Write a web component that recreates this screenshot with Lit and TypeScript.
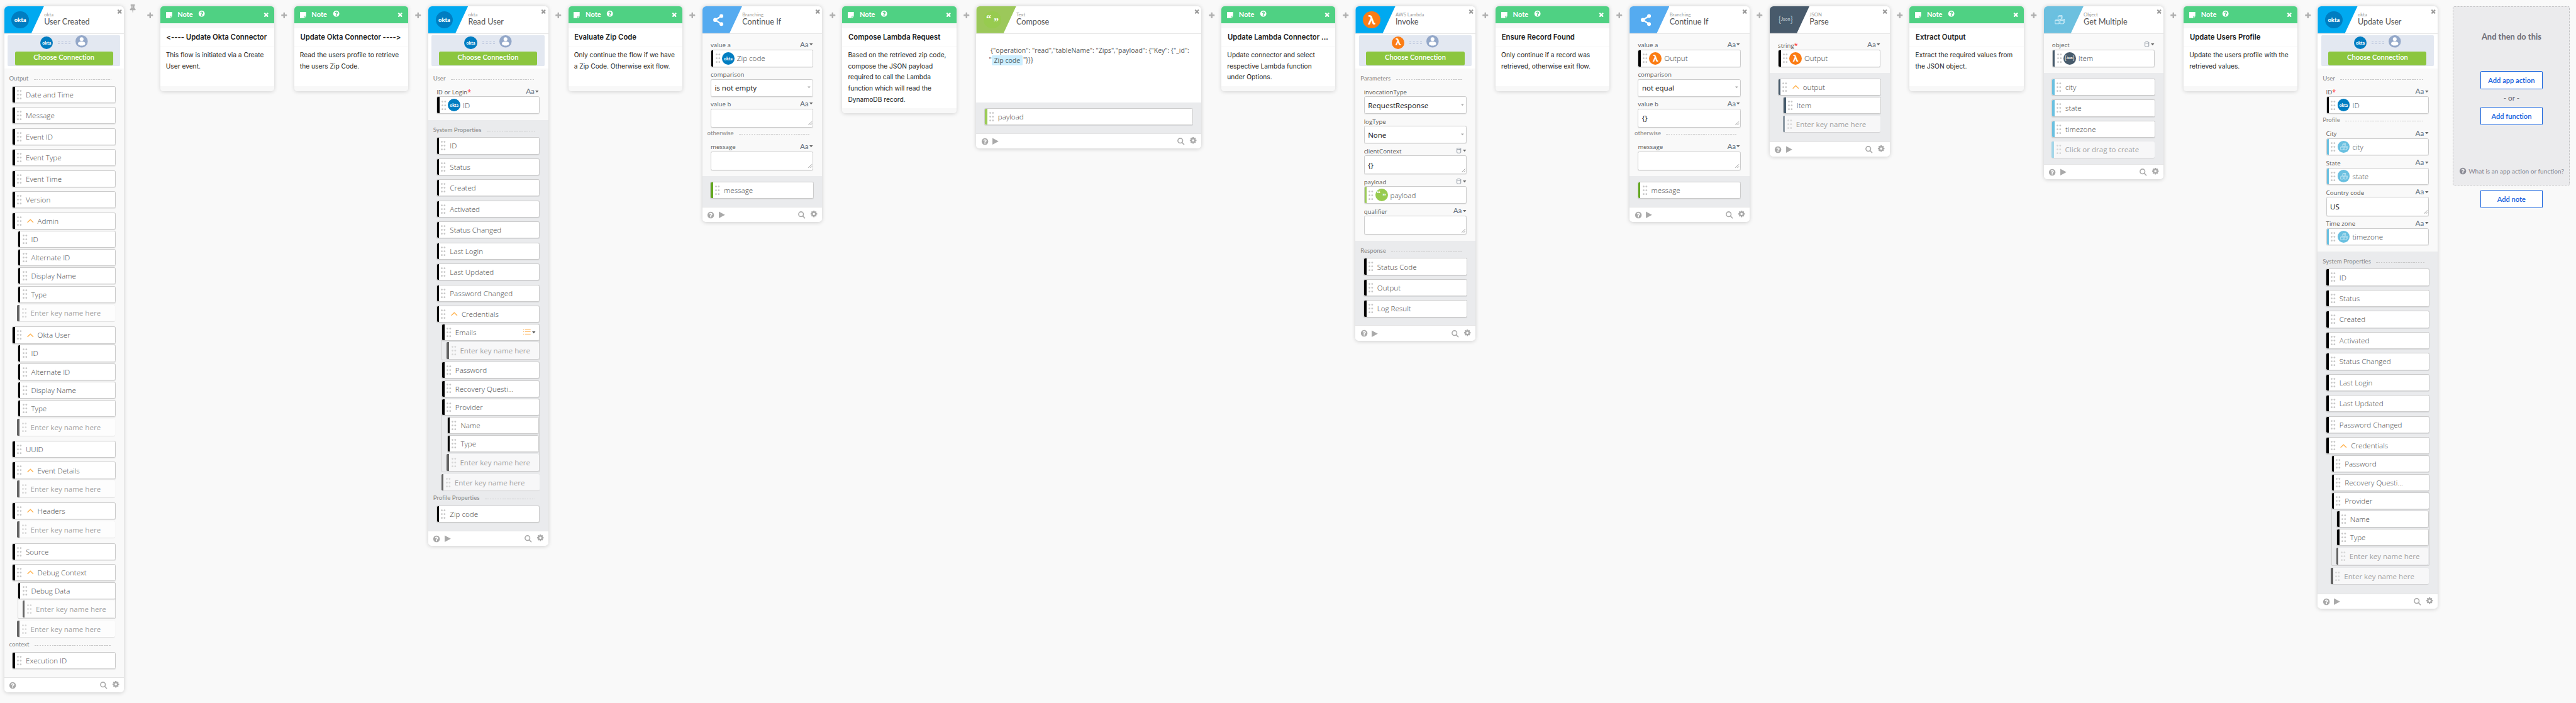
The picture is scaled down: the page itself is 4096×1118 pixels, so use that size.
import { LitElement, html, svg, css, nothing, TemplateResult } from "lit";
import { customElement } from "lit/decorators.js";
import { classMap } from "lit/directives/class-map.js";

type Brand = "okta" | "lambda" | "text" | "json" | "object" | "branch";
type Kind = "text" | "object" | "none";

interface Key { name: string; open?: boolean; list?: boolean; ghost?: boolean; kids?: Key[]; }
interface Field { label: string; required?: boolean; kind: Kind; value?: string; control: "pill" | "select" | "area"; brand?: Brand; }
interface Group { label?: string; fields?: Field[]; keys?: Key[]; }
interface Card { type: "card"; app: string; title: string; brand: Brand; connection?: boolean; inputs?: Group[]; outputs?: Group[]; plain?: boolean; compose?: boolean; }
interface Note { type: "note"; title: string; lines: string[]; }

const FA = {
  times:
    "M1490 1322q0 40-28 68l-136 136q-28 28-68 28t-68-28l-294-294-294 294q-28 28-68 28t-68-28l-136-136q-28-28-28-68t28-68l294-294-294-294q-28-28-28-68t28-68l136-136q28-28 68-28t68 28l294 294 294-294q28-28 68-28t68 28l136 136q28 28 28 68t-28 68l-294 294 294 294q28 28 28 68z",
  plus: "M1600 736v192q0 40-28 68t-68 28h-416v416q0 40-28 68t-68 28h-192q-40 0-68-28t-28-68v-416h-416q-40 0-68-28t-28-68v-192q0-40 28-68t68-28h416v-416q0-40 28-68t68-28h192q40 0 68 28t28 68v416h416q40 0 68 28t28 68z",
  cog: "M1152 896q0-106-75-181t-181-75-181 75-75 181 75 181 181 75 181-75 75-181zm512-109v222q0 12-8 23t-20 13l-185 28q-19 54-39 91 35 50 107 138 10 12 10 25t-9 23q-27 37-99 108t-94 71q-12 0-26-9l-138-108q-44 23-91 38-16 136-29 186-7 28-36 28h-222q-14 0-24.5-8.5t-11.5-21.500l-28-184q-49-16-90-37l-141 107q-10 9-25 9-14 0-25-11-126-114-165-168-7-10-7-23 0-12 8-23 15-21 51-66.500t54-70.500q-27-50-41-99l-183-27q-13-2-21-12.500t-8-23.500v-222q0-12 8-23t19-13l186-28q14-46 39-92-40-57-107-138-10-12-10-24 0-10 9-23 26-36 98.500-107.500t94.500-71.500q13 0 26 10l138 107q44-23 91-38 16-136 29-186 7-28 36-28h222q14 0 24.500 8.500t11.500 21.500l28 184q49 16 90 37l142-107q9-9 24-9 13 0 25 10 129 119 165 170 7 8 7 22 0 12-8 23-15 21-51 66.500t-54 70.500q26 50 41 98l183 28q13 2 21 12.500t8 23.500z",
  help: "M1024 1376v-192q0-14-9-23t-23-9h-192q-14 0-23 9t-9 23v192q0 14 9 23t23 9h192q14 0 23-9t9-23zm256-672q0-88-55.500-163t-138.500-116-170-41q-243 0-371 213-15 24 8 42l132 100q7 6 19 6 16 0 25-12 53-68 86-92 34-24 86-24 48 0 85.500 26t37.500 59q0 38-20 61t-68 45q-63 28-115.500 86.500t-52.500 125.500v36q0 14 9 23t23 9h192q14 0 23-9t9-23q0-19 21.500-49.500t54.500-49.500q32-18 49-28.500t46-35 44.500-48 28-60.500 12.500-81zm384 192q0 209-103 385.500t-279.500 279.500-385.500 103-385.500-103-279.500-279.500-103-385.500 103-385.500 279.500-279.500 385.500-103 385.500 103 279.500 279.500 103 385.500z",
  pin: "M800 864v-448q0-14-9-23t-23-9-23 9-9 23v448q0 14 9 23t23 9 23-9 9-23zm672 352q0 26-19 45t-45 19h-429l-51 483q-2 12-10.500 20.500t-20.500 8.500h-1q-27 0-32-27l-76-485h-404q-26 0-45-19t-19-45q0-123 78.500-221.500t177.500-98.500v-512q-52 0-90-38t-38-90 38-90 90-38h640q52 0 90 38t38 90-38 90-90 38v512q99 0 177.500 98.500t78.500 221.500z",
};

const fa = (name: keyof typeof FA, cls: string) =>
  html`<svg class="ico ${cls}" viewBox="0 0 1792 1792"><path d=${FA[name]}></path></svg>`;

const searchIcon = html`<svg class="ico i-search" viewBox="0 0 14 14">
  <circle cx="5.8" cy="5.8" r="4.7" fill="none" stroke="currentColor" stroke-width="1.9"></circle>
  <path d="M9.200 9.200L13 13.200" fill="none" stroke="currentColor" stroke-width="2.100" stroke-linecap="round"></path>
</svg>`;
const playIcon = html`<svg class="ico i-play" viewBox="0 0 12 14"><path d="M0 .5L12 7 0 13.500z"></path></svg>`;
const caret = html`<svg class="ico i-caret" viewBox="0 0 7 4"><path d="M0 0h7L3.500 4z"></path></svg>`;
const chevron = html`<svg class="i-chevron" viewBox="0 0 13 8"><path d="M.8 7L6.500 1.500 12.200 7"></path></svg>`;
const listIcon = html`<svg class="i-list" viewBox="0 0 14 11">
  <path d="M0 1h1.300M0 5.500h1.300M0 10h1.300M3.200 1H14M3.200 5.500H14M3.200 10H14"></path>
</svg>`;
const dots = html`<svg class="dots" viewBox="0 0 9 18.200">
  ${[1.8, 9.1, 16.4].map((y) => [1.8, 7].map((x) => svg`<circle cx=${x} cy=${y} r="1.650"></circle>`))}
</svg>`;
const grip = html`<svg class="grip" viewBox="0 0 8 8"><path d="M.5 7.500l7-7M4.500 7.500l3-3"></path></svg>`;
const cylinder = html`<svg class="i-cyl" viewBox="0 0 9 11">
  <path d="M.7 2v7c0 .9 1.600 1.400 3.800 1.400s3.800-.5 3.800-1.400V2"></path>
  <ellipse cx="4.500" cy="2" rx="3.800" ry="1.400"></ellipse>
</svg>`;
const noteIcon = html`<svg class="ico i-note" viewBox="0 0 12 12"><path d="M0 0h12v8H8.800q-1 0-1 1v3H0z M8.900 12V9.100H12z"></path></svg>`;
const userIcon = html`<svg class="i-user" viewBox="0 0 24 24">
  <circle cx="12" cy="12" r="12" fill="#94a8c9"></circle>
  <circle cx="12" cy="7.600" r="3.700" fill="#fff"></circle>
  <path d="M5 16.400c0-2.600 3-4 7-4s7 1.400 7 4c0 2-3.200 3.900-7 3.900s-7-1.900-7-3.900z" fill="#fff"></path>
</svg>`;
const shareIcon = html`<svg class="i-share" viewBox="0 0 20 24">
  <path d="M16 4.200L4 12l12 7.800" fill="none" stroke="#fff" stroke-width="2.800"></path>
  <circle cx="16" cy="4.200" r="3.700"></circle><circle cx="4" cy="12" r="3.900"></circle><circle cx="16" cy="19.800" r="3.700"></circle>
</svg>`;
const cubesIcon = html`<svg class="i-cubes" viewBox="0 0 20 18">
  <path d="M6.500 2.500L8.500.8h6v5.500l-2 2M6.500 2.500h6v5.800h-6zM12.500 2.500l2-1.700M1 10.200h7.500v6.500H1zM1 10.200l2-2h3.500M10.500 10.200H17v6.500h-6.500zM8.500 10.200l2-2M10.500 10.200l2-2h6.700L17 10.200M17 16.700l2-2V8.300M8.500 16.700l2-2"></path>
</svg>`;

const COLORS: Record<Brand, string> = {
  okta: "#000000",
  lambda: "#000000",
  text: "#9bcb57",
  json: "#475b6c",
  object: "#6ac0e0",
  branch: "#63a81f",
};

const mark = (b: Brand) => {
  switch (b) {
    case "okta":
      return html`<span class="m-okta">okta</span>`;
    case "lambda":
      return html`<span class="m-lambda">λ</span>`;
    case "text":
      return html`<span class="m-quote"><span class="q1">“</span><span class="q2">”</span></span>`;
    case "json":
      return html`<span class="m-json"><span class="brace">{</span>Json<span class="brace">}</span></span>`;
    case "object":
      return cubesIcon;
    default:
      return shareIcon;
  }
};
const badge = (b: Brand, size: string) => html`<span class="badge ${b} ${size}">${mark(b)}</span>`;

const k = (name: string, extra: Partial<Key> = {}): Key => ({ name, ...extra });
const ghost = k("Enter key name here", { ghost: true });
const pill = (label: string, value: string, brand: Brand, kind: Kind = "text", required = false): Field => ({
  label, value, brand, kind, required, control: "pill",
});
const note = (title: string, ...lines: string[]): Note => ({ type: "note", title, lines });

const person = () => [k("ID"), k("Alternate ID"), k("Display Name"), k("Type"), ghost];
const system = (emails: boolean): Key[] => [
  ...["ID", "Status", "Created", "Activated", "Status Changed", "Last Login", "Last Updated", "Password Changed"].map((n) => k(n)),
  k("Credentials", {
    open: true,
    kids: [
      ...(emails ? [k("Emails", { list: true, kids: [ghost] })] : []),
      k("Password"),
      k("Recovery Questi..."),
      k("Provider", { kids: [k("Name"), k("Type"), ghost] }),
      ghost,
    ],
  }),
];
const continueIf = (value: string, brand: Brand, comparison: string, b: string): Card => ({
  type: "card",
  app: "Branching",
  title: "Continue If",
  brand: "branch",
  inputs: [
    {
      fields: [
        pill("value a", value, brand),
        { label: "comparison", kind: "none", control: "select", value: comparison },
        { label: "value b", kind: "text", control: "area", value: b },
      ],
    },
    { label: "otherwise", fields: [{ label: "message", kind: "text", control: "area" }] },
  ],
  outputs: [{ keys: [k("message")] }],
});

const STEPS: (Card | Note)[] = [
  {
    type: "card",
    app: "okta",
    title: "User Created",
    brand: "okta",
    connection: true,
    plain: true,
    outputs: [
      {
        label: "Output",
        keys: [
          k("Date and Time"), k("Message"), k("Event ID"), k("Event Type"), k("Event Time"), k("Version"),
          k("Admin", { open: true, kids: person() }),
          k("Okta User", { open: true, kids: person() }),
          k("UUID"),
          k("Event Details", { open: true, kids: [ghost] }),
          k("Headers", { open: true, kids: [ghost] }),
          k("Source"),
          k("Debug Context", { open: true, kids: [k("Debug Data", { kids: [ghost] }), ghost] }),
        ],
      },
      { label: "context", keys: [k("Execution ID")] },
    ],
  },
  note("<---- Update Okta Connector", "This flow is initiated via a Create", "User event."),
  note("Update Okta Connector ---->", "Read the users profile to retrieve", "the users Zip Code."),
  {
    type: "card",
    app: "okta",
    title: "Read User",
    brand: "okta",
    connection: true,
    inputs: [{ label: "User", fields: [pill("ID or Login", "ID", "okta", "text", true)] }],
    outputs: [
      { label: "System Properties", keys: system(true) },
      { label: "Profile Properties", keys: [k("Zip code")] },
    ],
  },
  note("Evaluate Zip Code", "Only continue the flow if we have", "a Zip Code. Otherwise exit flow."),
  continueIf("Zip code", "okta", "is not empty", ""),
  note("Compose Lambda Request", "Based on the retrieved zip code,", "compose the JSON payload", "required to call the Lambda", "function which will read the", "DynamoDB record."),
  { type: "card", app: "Text", title: "Compose", brand: "text", compose: true, outputs: [{ keys: [k("payload")] }] },
  note("Update Lambda Connector ...", "Update connector and select", "respective Lambda function", "under Options."),
  {
    type: "card",
    app: "AWS Lambda",
    title: "Invoke",
    brand: "lambda",
    connection: true,
    inputs: [
      {
        label: "Parameters",
        fields: [
          { label: "invocationType", kind: "none", control: "select", value: "RequestResponse" },
          { label: "logType", kind: "none", control: "select", value: "None" },
          { label: "clientContext", kind: "object", control: "area", value: "{}" },
          pill("payload", "payload", "text", "object"),
          { label: "qualifier", kind: "text", control: "area" },
        ],
      },
    ],
    outputs: [{ label: "Response", keys: [k("Status Code"), k("Output"), k("Log Result")] }],
  },
  note("Ensure Record Found", "Only continue if a record was", "retrieved, otherwise exit flow."),
  continueIf("Output", "lambda", "not equal", "{}"),
  {
    type: "card",
    app: "JSON",
    title: "Parse",
    brand: "json",
    inputs: [{ fields: [pill("string", "Output", "lambda", "text", true)] }],
    outputs: [{ keys: [k("output", { open: true, kids: [k("Item"), ghost] })] }],
  },
  note("Extract Output", "Extract the required values from", "the JSON object."),
  {
    type: "card",
    app: "Object",
    title: "Get Multiple",
    brand: "object",
    inputs: [{ fields: [pill("object", "Item", "json", "object")] }],
    outputs: [{ keys: [k("city"), k("state"), k("timezone"), k("Click or drag to create", { ghost: true })] }],
  },
  note("Update Users Profile", "Update the users profile with the", "retrieved values."),
  {
    type: "card",
    app: "okta",
    title: "Update User",
    brand: "okta",
    connection: true,
    inputs: [
      { label: "User", fields: [pill("ID", "ID", "okta", "text", true)] },
      {
        label: "Profile",
        fields: [
          pill("City", "city", "object"),
          pill("State", "state", "object"),
          { label: "Country code", kind: "text", control: "area", value: "US" },
          pill("Time zone", "timezone", "object"),
        ],
      },
    ],
    outputs: [{ label: "System Properties", keys: system(false) }],
  },
];

@customElement("app-root")
export class AppRoot extends LitElement {
  static styles = css`
    :host { display: block; width: 4096px; height: 1118px; overflow: hidden; background: #f9f9f9; }
    * { box-sizing: border-box; }
    svg { display: block; flex: none; overflow: visible; }
    .page {
      zoom: 0.83711; width: 4893px; height: 1336px; overflow: hidden;
      display: flex; align-items: flex-start; padding: 12px 0 0 7.9px;
      font-family: Lato, "Liberation Sans", sans-serif; font-variant-ligatures: none; color: #555; white-space: nowrap;
    }
    .ico { fill: currentColor; }
    .i-times { width: 12.4px; height: 12.4px; }
    .i-plus { width: 13.8px; height: 13.8px; }
    .i-help { width: 14.6px; height: 14.6px; }
    .i-cog { width: 14.8px; height: 14.8px; }
    .i-search { width: 13.6px; height: 13.6px; }
    .i-play { width: 11.8px; height: 13.6px; }
    .i-caret { width: 6.6px; height: 3.8px; }
    .i-pin { width: 17px; height: 17px; }

    .gap { width: 38.2px; flex: none; display: flex; justify-content: center; padding-top: 10.7px; color: #b0b0b0; }
    .gap.first { width: 68.6px; justify-content: flex-start; gap: 16.6px; padding-left: 8.6px; }
    .gap.first .i-pin { margin-top: -15.5px; }
    .gap.last { width: 29px; }

    .note { width: 216.4px; flex: none; border-radius: 6px; overflow: hidden; background: #fff; box-shadow: 0 1px 7px rgba(0, 0, 0, 0.16); }
    .note-head { height: 32.6px; background: #4fd183; color: #fff; display: flex; align-items: center; padding: 0 10.5px; }
    .i-note { width: 11.6px; height: 11.6px; }
    .note-name { font-size: 13.2px; font-weight: 700; margin: -4px 10.4px 0 10.8px; }
    .note-head .i-help { width: 13.6px; height: 13.6px; margin-top: -3.6px; }
    .note-head .i-times { margin-left: auto; width: 12.5px; height: 12.5px; margin-right: -1.5px; }
    .note-gap { height: 9.4px; background: #f8f8f8; }
    .note-title { font: 600 13.5px/34px Inter, sans-serif; font-feature-settings: "calt" 0; height: 34.3px; padding-left: 11.5px; color: #1d1d21; border-bottom: 1px solid #f9f9f9; }
    .note-body { min-height: 75.2px; padding: 6.4px 0 5.8px 10.8px; font: 400 12.2px/21px Inter, sans-serif; color: #1d1d21; }
    .note-body div { height: 21px; }
    .note-foot { height: 9.6px; background: #f8f8f8; }

    .card { width: 227.8px; flex: none; border-radius: 7px; overflow: hidden; background: #f9f9f9; box-shadow: 0 1px 8px rgba(0, 0, 0, 0.18); }
    .card.wide { width: 427.5px; }
    .card-head { height: 52px; background: #fff; display: flex; border-bottom: 1px solid #e6e6e6; }
    .tag { width: 75.5px; flex: none; height: 51px; display: flex; align-items: center; padding-left: 14px; clip-path: polygon(0 0, 100% 0, 68.5% 100%, 0 100%); }
    .tag.okta, .tag.lambda { background: #00a9f0; }
    .tag.branch { background: #55abf0; }
    .tag.text { background: #9cc85a; }
    .tag.json { background: #485a6b; }
    .tag.object { background: #6cc0df; }
    .heading { flex: 1; padding: 10px 0 0 0.4px; }
    .app { font-size: 9.2px; line-height: 12px; color: #999; }
    .title { font-size: 15.1px; line-height: 18px; color: #555; margin-top: -1.4px; }
    .card-head .i-times { margin: 3.6px 2.4px 0 0; color: #999; }

    .badge { border-radius: 50%; flex: none; display: flex; align-items: center; justify-content: center; color: #fff; }
    .badge.lg { width: 33px; height: 33px; font-size: 33px; }
    .badge.md { width: 24.4px; height: 24.4px; font-size: 24.4px; }
    .badge.sm { width: 23.8px; height: 23.8px; font-size: 23.8px; }
    .badge.okta { background: #007dc1; }
    .badge.lambda { background: #fb7c14; }
    .badge.text { background: #97cb4f; }
    .badge.json { background: #475b6c; }
    .badge.object { background: #6ac0e0; }
    .m-okta { font-weight: 900; font-size: 0.34em; line-height: 1.2; }
    .m-lambda { font: 700 0.7em/1.3 "Open Sans", sans-serif; }
    .m-quote { display: flex; gap: 0.25em; font: 700 0.58em/1 "Liberation Serif", serif; }
    .q1 { margin-top: 0.1em; }
    .q2 { margin-top: 0.42em; }
    .m-json { font-size: 0.25em; font-weight: 700; line-height: 1.2; display: flex; align-items: center; }
    .brace { font-weight: 400; font-size: 1.8em; line-height: 1; }
    .lg .m-json { font-size: 0.265em; color: #b6bec6; }
    .i-cubes { width: 0.6em; height: 0.54em; fill: none; stroke: #e6f6fc; stroke-width: 1.1; stroke-linejoin: round; opacity: 0.85; }
    .i-share { width: 19.5px; height: 23.4px; fill: #fff; }

    .conn { background: #fff; height: 66px; padding: 3.5px 7px 0 6.4px; }
    .conn-box { height: 58.4px; background: #e3e8f1; border-radius: 2px; display: flex; flex-direction: column; align-items: center; }
    .conn-row { display: flex; align-items: flex-start; height: 31px; width: 100%; padding-left: 62.2px; }
    .conn-row .badge { margin-top: 1.3px; }
    .i-user { width: 23.4px; height: 23.4px; margin: -1px 0 0 8.6px; }
    .wires { width: 24px; height: 6.6px; margin: 9.8px 0 0 9.4px; border-top: 1px dashed #b9c4db; border-bottom: 1px dashed #b9c4db; }
    .choose { width: 186.4px; height: 25.4px; background: #8cc63f; border-radius: 3px; color: #fff; font-size: 13.35px; font-weight: 600; line-height: 22.5px; text-align: center; }

    .sect { padding-top: 7.3px; padding-bottom: 11.1px; }
    .sect.labelled { padding-top: 7.7px; }
    .sect.out { background: #eaebed; padding-top: 10.8px; padding-bottom: 7.6px; }
    .sect.out.labelled { padding-top: 7.6px; }
    .plain .sect.out { background: #f9f9f9; padding-top: 8px; }
    .label { height: 25.5px; display: flex; align-items: flex-start; padding: 4.5px 24.6px 0 9.4px; gap: 10px; font-size: 11.49px; line-height: 14px; color: #8e8e8e; font-weight: 500; }
    .label i { flex: 1; height: 1px; margin-top: 8.4px; background: repeating-linear-gradient(90deg, #c9c9c9 0 3px, transparent 3px 4.7px); }
    .in .label { height: 22.9px; }

    .field { padding: 0 16.8px 0 15.8px; }
    .field-top { height: 22.8px; display: flex; align-items: center; justify-content: space-between; padding-top: 6.8px; font: 400 11.6px/14px "Open Sans", sans-serif; color: #5a5a5a; }
    .req { color: #f22; font-size: 13px; }
    .pick { display: flex; align-items: center; gap: 1.6px; padding: 0 1px 3.6px 0; color: #666; }
    .aa { font: 500 13.9px/14px Lato, sans-serif; color: #6b7683; }
    .i-cyl { width: 8.8px; height: 10.6px; margin-right: 1.6px; fill: none; stroke: #7d8793; stroke-width: 1.1; }
    .control { height: 33.3px; border: 1px solid #ccc; border-radius: 3px; background: #fff; box-shadow: 0 1px 1px rgba(0, 0, 0, 0.08); display: flex; align-items: center; }
    .control.area { height: 35.9px; position: relative; }
    .control.select, .control.area { padding: 0 4px 0 6.6px; font: 400 13.8px/18px "Open Sans", sans-serif; color: #111; justify-content: space-between; }
    .control.select .i-caret { color: #aaa; width: 5.6px; height: 4.6px; margin-top: -2px; }
    .grip { position: absolute; right: 1.4px; bottom: 3px; width: 7.5px; height: 7.5px; stroke: #555; stroke-width: 0.8; fill: none; }
    .bar { align-self: stretch; width: 4.2px; flex: none; border-radius: 2px 0 0 2px; }
    .dots { width: 9px; height: 18.2px; fill: #c6c6c6; }
    .control .dots { margin: 0 3.2px 0 3.9px; }
    .value { margin-left: 4.8px; font: 300 13.89px/18px "Open Sans", sans-serif; color: #484848; }

    .keys { padding: 0 16px 0 15.2px; }
    .key { height: 32.5px; border: 1px solid #cbcbcb; border-radius: 3px; background: #fff; box-shadow: 0 1px 1px rgba(0, 0, 0, 0.09); display: flex; align-items: center; font: 300 13.89px/18px "Open Sans", sans-serif; color: #484848; }
    .key .dots { margin: 0 7.6px 0 3.9px; }
    .top { margin-bottom: 7.5px; }
    .keys.tight > .top:last-child { margin-bottom: 0; }
    .i-chevron { width: 12.6px; height: 7.8px; fill: none; stroke: #ffb24d; stroke-width: 1.7; margin: 0 7.6px 0 2px; }
    .i-list { width: 14px; height: 11px; fill: none; stroke: #ffab45; stroke-width: 1.1; margin: -3.6px 2.6px 0 auto; }
    .key .i-caret { margin: -1.4px 6.4px 0 0; color: #555; }
    .kids { display: flow-root; padding: 2.2px 0 0 10.2px; }
    .kid { margin-bottom: 2.5px; }
    .kid.nest { margin-bottom: 3px; border-radius: 3px; box-shadow: inset 0 0 0 1px #ccc; }
    .kid.nest > .kids { padding-right: 1px; padding-bottom: 0.1px; }
    .ghost { height: 31.6px; margin: 0 0.8px 2.5px -0.7px; border: 0; background: rgba(255, 255, 255, 0.6); font-weight: 400; font-size: 13.82px; color: #a3a3a3; box-shadow: 0 1px 1px rgba(0, 0, 0, 0.1); }
    .ghost .bar { opacity: 0.6; }
    .ghost .dots { fill: #d6d6d6; margin-left: 4.6px; }
    .kid + .ghost-wrap, .top > .kids > .ghost-wrap:first-child { padding-top: 0.9px; }
    .top > .ghost { margin: -1px 0.6px -3.4px 0; }

    .compose { height: 131px; background: #fff; padding: 23.4px 0 0 24px; font: 400 12.6px/18.2px "Open Sans", sans-serif; color: #5a5a5a; }
    .compose div:first-child { padding-left: 3px; }
    .chip { background: #cdeeff; border-radius: 2px; padding: 1px 4.6px 2px; margin-right: 1px; color: #4d5f68; }

    .foot { height: 29px; background: #fff; border-top: 1px solid #e4e4e4; display: flex; align-items: center; padding: 1px 8px 0 8.9px; color: #a9a9a9; }
    .foot .i-play { margin-left: 7.6px; }
    .foot .i-search { margin: 0 9.2px 0 auto; }
    .foot .i-cog { margin-top: -3.6px; }

    .end { width: 222.4px; flex: none; display: flex; flex-direction: column; align-items: center; font-weight: 600; }
    .drop { width: 100%; height: 340.6px; display: flex; flex-direction: column; align-items: center; border: 2px dashed #c2c2c4; border-radius: 3px; background: #ebebed; }
    .drop-title { margin-top: 46.2px; height: 20px; font-size: 15.44px; line-height: 20px; font-weight: 700; color: #6e6e78; }
    .btn { width: 118.8px; height: 35px; border: 1px solid #1662dd; border-radius: 2px; background: #fff; color: #1662dd; font-size: 13.3px; line-height: 32.6px; text-align: center; }
    .drop .btn:nth-of-type(2) { margin-top: 55.4px; }
    .or { height: 33.2px; line-height: 32px; font-size: 14px; font-weight: 500; color: #6e6e78; }
    .ask { margin-top: 79.9px; display: flex; align-items: center; gap: 3.8px; font-size: 12.05px; line-height: 16px; font-weight: 500; color: #8c8c96; }
    .ask .i-help { margin-top: -2px; }
    .end > .btn { margin-top: 8.4px; }
  `;

  private key(key: Key, color: string, top: boolean): TemplateResult {
    if (key.ghost) {
      return html`<div class=${top ? "top" : "ghost-wrap"}>
        <div class="key ghost"><span class="bar" style="background:${color}"></span>${dots}${key.name}</div>
      </div>`;
    }
    return html`<div class=${classMap({ top, kid: !top, nest: !top && !!key.kids })}>
      <div class="key">
        <span class="bar" style="background:${color}"></span>${dots}${key.open ? chevron : nothing}${key.name}
        ${key.list ? html`${listIcon}${caret}` : nothing}
      </div>
      ${key.kids ? html`<div class="kids">${key.kids.map((c) => this.key(c, color, false))}</div>` : nothing}
    </div>`;
  }

  private field(f: Field) {
    const pick =
      f.kind === "none"
        ? nothing
        : html`<span class="pick">${f.kind === "text" ? html`<span class="aa">Aa</span>` : cylinder}${caret}</span>`;
    const body =
      f.control === "pill"
        ? html`<span class="bar" style="background:${COLORS[f.brand!]}"></span>${dots}${badge(f.brand!, "sm")}<span class="value">${f.value}</span>`
        : html`<span>${f.value ?? ""}</span>${f.control === "select" ? caret : grip}`;
    return html`<div class="field">
      <div class="field-top"><span>${f.label}${f.required ? html`<span class="req">*</span>` : nothing}</span>${pick}</div>
      <div class="control ${f.control}">${body}</div>
    </div>`;
  }

  private label(text?: string) {
    return text ? html`<div class="label"><span>${text}</span><i></i></div>` : nothing;
  }

  private card(c: Card) {
    const color = COLORS[c.brand];
    return html`<section class=${classMap({ card: true, wide: !!c.compose, plain: !!c.plain })}>
      <div class="card-head">
        <div class="tag ${c.brand}">${badge(c.brand, "lg")}</div>
        <div class="heading"><div class="app">${c.app}</div><div class="title">${c.title}</div></div>
        ${fa("times", "i-times")}
      </div>
      ${c.connection
        ? html`<div class="conn"><div class="conn-box">
            <div class="conn-row">${badge(c.brand, "md")}<span class="wires"></span>${userIcon}</div>
            <div class="choose">Choose Connection</div>
          </div></div>`
        : nothing}
      ${c.compose
        ? html`<div class="compose">
            <div>{"operation": "read","tableName": "Zips","payload": {"Key": {"_id":</div>
            <div>"<span class="chip">Zip code</span>"}}}</div>
          </div>`
        : nothing}
      ${c.inputs
        ? html`<div class=${classMap({ sect: true, in: true, labelled: !!c.inputs[0].label })}>
            ${c.inputs.map((g) => html`${this.label(g.label)}${g.fields!.map((f) => this.field(f))}`)}
          </div>`
        : nothing}
      <div class=${classMap({ sect: true, out: true, labelled: !!c.outputs![0].label })}>
        ${c.outputs!.map(
          (g, i) => html`${this.label(g.label)}
            <div class=${classMap({ keys: true, tight: i < c.outputs!.length - 1 })}>${g.keys!.map((x) => this.key(x, color, true))}</div>`
        )}
      </div>
      <div class="foot">
        ${fa("help", "i-help")}${c.plain ? nothing : playIcon}${searchIcon}${fa("cog", "i-cog")}
      </div>
    </section>`;
  }

  private note(n: Note) {
    return html`<section class="note">
      <div class="note-head">${noteIcon}<span class="note-name">Note</span>${fa("help", "i-help")}${fa("times", "i-times")}</div>
      <div class="note-gap"></div>
      <div class="note-title">${n.title}</div>
      <div class="note-body">${n.lines.map((l) => html`<div>${l}</div>`)}</div>
      <div class="note-foot"></div>
    </section>`;
  }

  render() {
    return html`<main class="page">
      ${STEPS.map((s, i) => html`
        ${s.type === "card" ? this.card(s) : this.note(s)}
        ${i === STEPS.length - 1
          ? html`<div class="gap last"></div>`
          : html`<div class=${classMap({ gap: true, first: i === 0 })}>${i === 0 ? fa("pin", "i-pin") : nothing}${fa("plus", "i-plus")}</div>`}
      `)}
      <aside class="end">
        <div class="drop">
          <div class="drop-title">And then do this</div>
          <div class="btn">Add app action</div>
          <div class="or">- or -</div>
          <div class="btn">Add function</div>
          <div class="ask">${fa("help", "i-help")}What is an app action or function?</div>
        </div>
        <div class="btn">Add note</div>
      </aside>
    </main>`;
  }
}
